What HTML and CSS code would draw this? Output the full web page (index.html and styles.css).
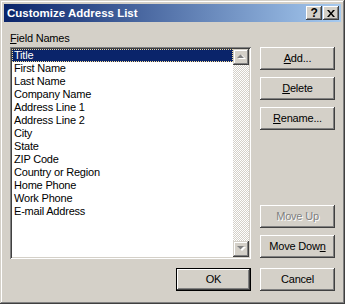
FILE: index.html
```html
<!DOCTYPE html>
<html>
<head>
<meta charset="utf-8">
<link rel="stylesheet" href="styles.css">
</head>
<body>
<div class="window">
  <div class="titlebar">
    <span class="title">Customize Address List</span>
    <div class="caption-btns">
      <div class="cap-btn help">?</div>
      <div class="cap-btn close">
        <svg width="8" height="7" viewBox="0 0 8 7"><path d="M0 0h2l2 2.5L6 0h2L5 3.5 8 7H6L4 4.5 2 7H0l3-3.5z" fill="#000"/></svg>
      </div>
    </div>
  </div>
  <div class="client">
    <div class="label"><u>F</u>ield Names</div>
    <div class="main">
      <div class="listbox">
        <ul class="items">
          <li class="selected"><span>Title</span></li>
          <li>First Name</li>
          <li>Last Name</li>
          <li>Company Name</li>
          <li>Address Line 1</li>
          <li>Address Line 2</li>
          <li>City</li>
          <li>State</li>
          <li>ZIP Code</li>
          <li>Country or Region</li>
          <li>Home Phone</li>
          <li>Work Phone</li>
          <li>E-mail Address</li>
        </ul>
        <div class="scrollbar">
          <div class="sb-btn">
            <svg width="9" height="6" viewBox="0 0 9 6"><path d="M1 5h8L5 1z" fill="#fff"/><path d="M0 4h7L3.5 0.5z" fill="#808080"/></svg>
          </div>
          <div class="sb-track"></div>
          <div class="sb-btn">
            <svg width="9" height="6" viewBox="0 0 9 6"><path d="M1 1h8L5 5z" fill="#fff"/><path d="M0 0h7L3.5 3.5z" fill="#808080"/></svg>
          </div>
        </div>
      </div>
      <div class="side">
        <div class="btn-group">
          <div class="btn"><u>A</u>dd...</div>
          <div class="btn"><u>D</u>elete</div>
          <div class="btn"><u>R</u>ename...</div>
        </div>
        <div class="btn-group">
          <div class="btn disabled">Move Up</div>
          <div class="btn">Move Dow<u>n</u></div>
        </div>
      </div>
    </div>
    <div class="footer">
      <div class="btn default">OK</div>
      <div class="btn">Cancel</div>
    </div>
  </div>
</div>
</body>
</html>
```

FILE: styles.css
```css
* { box-sizing: border-box; }
html, body { margin: 0; padding: 0; }
body {
  font-family: "Liberation Sans", Arial, sans-serif;
  font-size: 11px;
  letter-spacing: -0.2px;
  color: #000;
  background: #d4d0c8;
}
.window {
  width: 345px;
  height: 304px;
  background: #d4d0c8;
  padding: 4px;
  display: flex;
  flex-direction: column;
  box-shadow: inset -1px -1px #404040, inset 1px 1px #d4d0c8,
              inset -2px -2px #808080, inset 2px 2px #fff;
}
.titlebar {
  height: 18px;
  display: flex;
  align-items: center;
  justify-content: space-between;
  padding: 0 2px 0 3px;
  background: linear-gradient(to right, #0a246a, #a6caf0);
}
.title {
  color: #fff;
  font-weight: bold;
  font-size: 11.5px;
  letter-spacing: 0;
  line-height: 14px;
}
.caption-btns {
  display: flex;
  gap: 1px;
}
.cap-btn {
  width: 16px;
  height: 14px;
  background: #d4d0c8;
  display: flex;
  align-items: center;
  justify-content: center;
  box-shadow: inset -1px -1px #404040, inset 1px 1px #fff,
              inset -2px -2px #808080, inset 2px 2px #d4d0c8;
}
.cap-btn.help {
  font-weight: bold;
  font-size: 12px;
  line-height: 14px;
  padding-bottom: 1px;
}
.client {
  flex: 1;
  display: flex;
  flex-direction: column;
  padding: 10px 6px 9px 6px;
}
.label {
  height: 13px;
  line-height: 13px;
  margin-bottom: 2px;
}
.main {
  display: flex;
  gap: 9px;
}
.listbox {
  width: 241px;
  height: 212px;
  background: #fff;
  padding: 2px;
  display: flex;
  box-shadow: inset 1px 1px #808080, inset -1px -1px #fff,
              inset 2px 2px #404040, inset -2px -2px #d4d0c8;
}
.items {
  list-style: none;
  margin: 0;
  padding: 0;
  flex: 1;
}
.items li {
  height: 13px;
  line-height: 13px;
  padding-left: 2px;
  white-space: nowrap;
}
.items li.selected {
  background: #0a246a;
  color: #fff;
  outline: 1px dotted #f5db95;
  outline-offset: -1px;
}
.scrollbar {
  width: 16px;
  display: flex;
  flex-direction: column;
}
.sb-btn {
  width: 16px;
  height: 16px;
  background: #d4d0c8;
  display: flex;
  align-items: center;
  justify-content: center;
  box-shadow: inset -1px -1px #404040, inset 1px 1px #d4d0c8,
              inset -2px -2px #808080, inset 2px 2px #fff;
}
.sb-track {
  flex: 1;
  background-color: #fff;
  background-image: repeating-conic-gradient(#d4d0c8 0 25%, #fff 0 50%);
  background-size: 2px 2px;
}
.side {
  width: 75px;
  display: flex;
  flex-direction: column;
  justify-content: space-between;
  padding-bottom: 1px;
}
.btn-group {
  display: flex;
  flex-direction: column;
  gap: 7px;
}
.btn {
  width: 75px;
  height: 23px;
  background: #d4d0c8;
  display: flex;
  align-items: center;
  justify-content: center;
  line-height: 13px;
  box-shadow: inset -1px -1px #404040, inset 1px 1px #fff,
              inset -2px -2px #808080, inset 2px 2px #d4d0c8;
}
.btn u { text-underline-offset: 1px; }
.btn.disabled {
  color: #808080;
  text-shadow: 1px 1px #fff;
}
.btn.default {
  box-shadow: inset 0 0 0 1px #000,
              inset -2px -2px #404040, inset 2px 2px #fff,
              inset -3px -3px #808080;
}
.footer {
  margin-top: auto;
  display: flex;
  justify-content: flex-end;
  gap: 9px;
}
```
